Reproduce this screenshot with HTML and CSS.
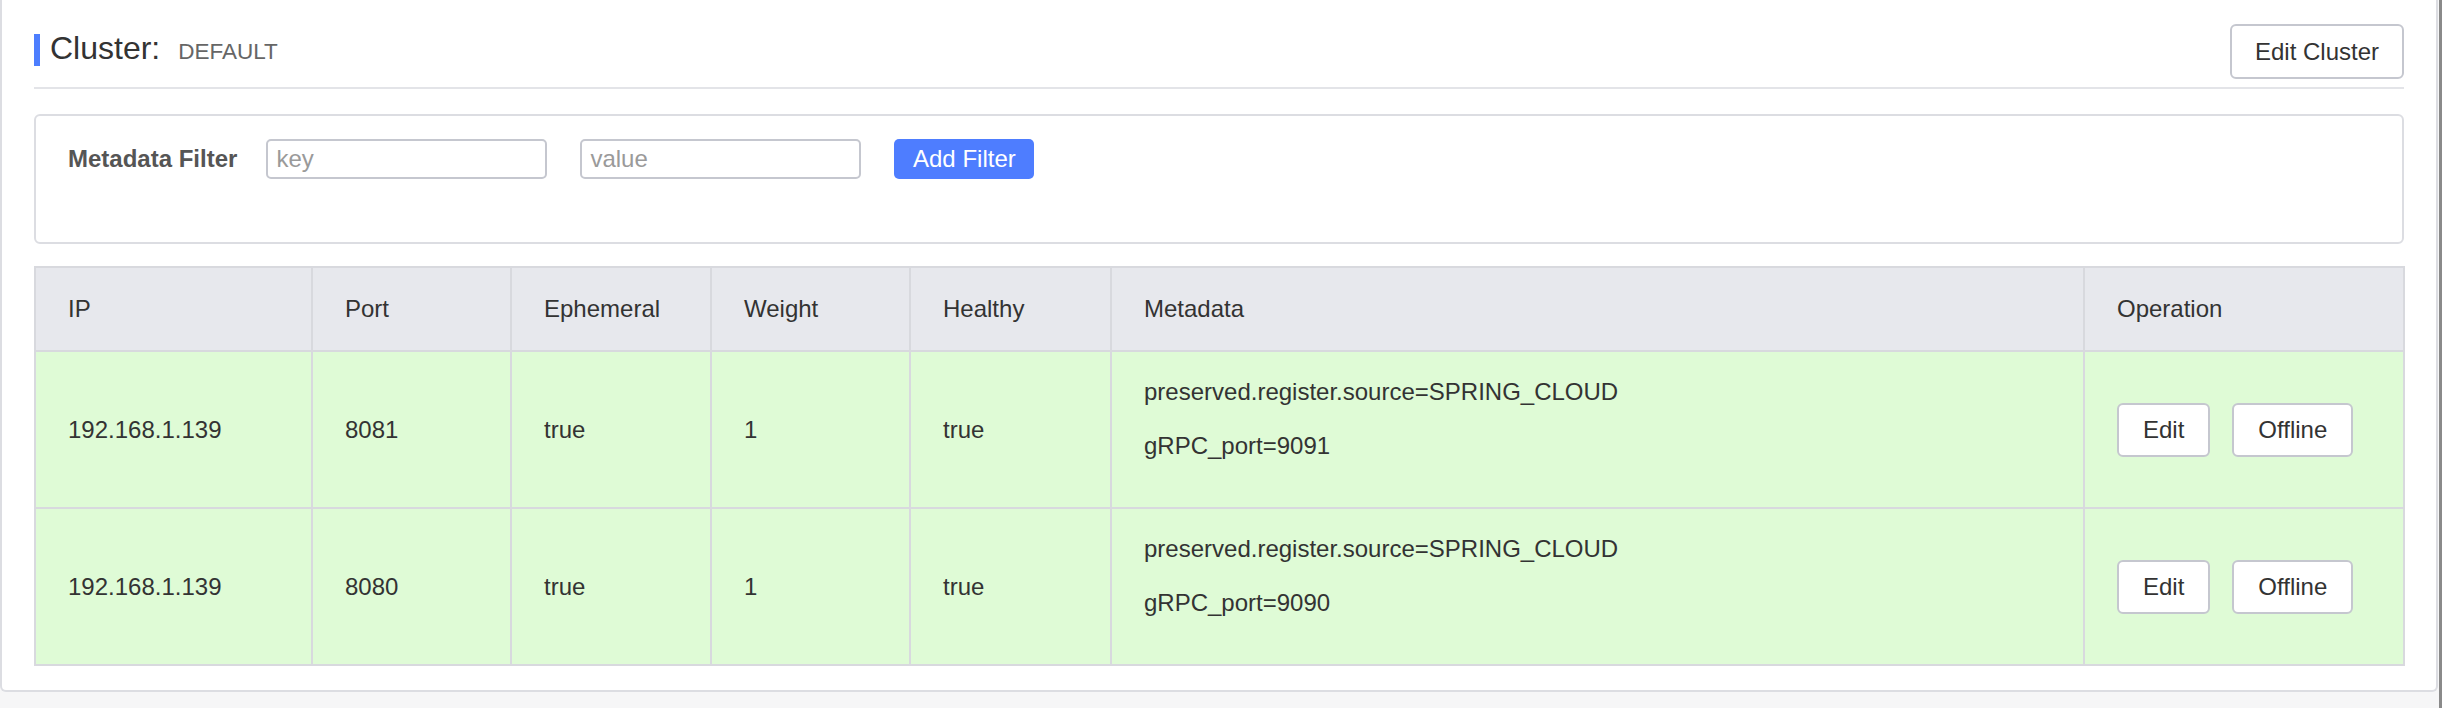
FILE: index.html
```html
<!DOCTYPE html>
<html lang="en">
<head>
    <meta charset="UTF-8">
    <title>Cluster: DEFAULT</title>
    <link rel="stylesheet" href="styles.css">
</head>
<body>
    <div class="page">
        <div class="card">
            <!-- cluster header -->
            <div class="cluster-header">
                <div class="cluster-title">
                    <span class="title-bar"></span>
                    <span class="title-text">Cluster:<span class="cluster-name">DEFAULT</span></span>
                </div>
                <button class="btn">Edit Cluster</button>
            </div>

            <!-- metadata filter -->
            <div class="filter-card">
                <div class="filter-row">
                    <span class="filter-label">Metadata Filter</span>
                    <input class="filter-input" type="text" placeholder="key">
                    <input class="filter-input" type="text" placeholder="value">
                    <button class="btn-primary">Add Filter</button>
                </div>
            </div>

            <!-- instance table -->
            <table class="instance-table">
                <colgroup>
                    <col style="width: 277px">
                    <col style="width: 199px">
                    <col style="width: 200px">
                    <col style="width: 199px">
                    <col style="width: 201px">
                    <col style="width: 973px">
                    <col style="width: 320px">
                </colgroup>
                <thead>
                    <tr>
                        <th>IP</th>
                        <th>Port</th>
                        <th>Ephemeral</th>
                        <th>Weight</th>
                        <th>Healthy</th>
                        <th>Metadata</th>
                        <th>Operation</th>
                    </tr>
                </thead>
                <tbody>
                    <tr>
                        <td>192.168.1.139</td>
                        <td>8081</td>
                        <td>true</td>
                        <td>1</td>
                        <td>true</td>
                        <td>
                            <p class="meta-line">preserved.register.source=SPRING_CLOUD</p>
                            <p class="meta-line">gRPC_port=9091</p>
                        </td>
                        <td>
                            <div class="ops">
                                <button class="btn btn-small">Edit</button>
                                <button class="btn btn-small">Offline</button>
                            </div>
                        </td>
                    </tr>
                    <tr>
                        <td>192.168.1.139</td>
                        <td>8080</td>
                        <td>true</td>
                        <td>1</td>
                        <td>true</td>
                        <td>
                            <p class="meta-line">preserved.register.source=SPRING_CLOUD</p>
                            <p class="meta-line">gRPC_port=9090</p>
                        </td>
                        <td>
                            <div class="ops">
                                <button class="btn btn-small">Edit</button>
                                <button class="btn btn-small">Offline</button>
                            </div>
                        </td>
                    </tr>
                </tbody>
            </table>
        </div>
    </div>
</body>
</html>
```

FILE: styles.css
```css
/* page */
body {
    margin: 0;
    padding: 0;
    background: #f6f6f7;
    font-family: "Liberation Sans", Arial, Helvetica, sans-serif;
    color: #333;
}

.page {
    width: 2438px;
    min-height: 708px;
    padding-right: 1px;
    border-right: 3px solid #8a8a8a;
}

/* main card */
.card {
    background: #fff;
    border: 2px solid #dcdde2;
    border-top: 0;
    border-radius: 0 0 6px 6px;
    padding: 0 32px 24px 32px;
}

/* cluster header */
.cluster-header {
    display: flex;
    align-items: center;
    justify-content: space-between;
    padding: 24px 0 8px;
    border-bottom: 2px solid #e3e4e8;
}

.cluster-title {
    display: flex;
    align-items: center;
    margin-bottom: 4px;
}

.title-bar {
    width: 6px;
    height: 32px;
    background: #4d7efe;
    margin-right: 10px;
}

.title-text {
    font-size: 32px;
    line-height: 36px;
    color: #333;
}

.cluster-name {
    font-size: 22.5px;
    color: #666;
    margin-left: 18px;
}

/* buttons */
.btn {
    height: 55px;
    padding: 0 23px;
    background: #fff;
    border: 2px solid #c5c7cf;
    border-radius: 6px;
    font-family: inherit;
    font-size: 24px;
    color: #333;
    cursor: pointer;
}

.btn-small {
    height: 54px;
    padding: 0 24px;
}

.btn-primary {
    height: 40px;
    width: 140px;
    padding: 0;
    background: #4e7dff;
    border: 0;
    border-radius: 5px;
    font-family: inherit;
    font-size: 24px;
    color: #fff;
    cursor: pointer;
}

/* filter */
.filter-card {
    box-sizing: border-box;
    height: 130px;
    margin-top: 25px;
    padding: 23px 32px 0;
    border: 2px solid #dcdde2;
    border-radius: 6px;
}

.filter-row {
    display: flex;
    align-items: center;
    gap: 33px;
}

.filter-label {
    font-size: 24px;
    font-weight: bold;
    color: #555;
    margin-right: -4px;
}

.filter-input {
    box-sizing: border-box;
    width: 281px;
    height: 40px;
    padding: 0 8px;
    border: 2px solid #c5c7cf;
    border-radius: 5px;
    font-family: inherit;
    font-size: 24px;
    color: #333;
    outline: none;
}

.filter-input::placeholder {
    color: #9a9a9a;
}

/* table */
.instance-table {
    width: 2369px;
    margin-top: 22px;
    border-collapse: collapse;
    table-layout: fixed;
    font-size: 24px;
}

.instance-table th,
.instance-table td {
    border: 2px solid #d8d9de;
    padding: 0 32px;
    text-align: left;
    vertical-align: middle;
}

.instance-table th {
    height: 82px;
    background: #e7e8ed;
    font-weight: normal;
    color: #333;
}

.instance-table td {
    height: 155px;
    background: #dffbd6;
    color: #333;
}

.meta-line {
    margin: 0 0 22px;
    line-height: 36px;
}

.meta-line + .meta-line {
    margin-top: -4px;
}

.ops {
    display: flex;
    gap: 22px;
}
```
